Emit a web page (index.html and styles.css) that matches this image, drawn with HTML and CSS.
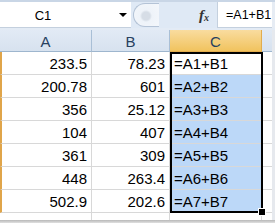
FILE: index.html
```html
<!DOCTYPE html>
<html>
<head>
<meta charset="utf-8">
<link rel="stylesheet" href="styles.css">
</head>
<body>
<div class="app">
  <div class="fbar">
    <div class="namebox">
      <span class="name">C1</span>
      <span class="arrow"></span>
    </div>
    <div class="mid">
      <span class="knob"></span>
      <span class="fx">f<sub>x</sub></span>
    </div>
    <div class="finput">=A1+B1</div>
    <div class="fright"></div>
  </div>
  <div class="gap"></div>
  <div class="sheet">
    <div class="hdr">A</div><div class="hdr">B</div><div class="hdr sel">C</div><div class="hdr last"></div><div class="side"></div>

    <div class="c num lb">233.5</div><div class="c num">78.23</div><div class="c f active">=A1+B1</div><div class="c e"></div><div class="side"></div>
    <div class="c num lb">200.78</div><div class="c num">601</div><div class="c f">=A2+B2</div><div class="c e"></div><div class="side"></div>
    <div class="c num lb">356</div><div class="c num">25.12</div><div class="c f">=A3+B3</div><div class="c e"></div><div class="side"></div>
    <div class="c num lb">104</div><div class="c num">407</div><div class="c f">=A4+B4</div><div class="c e"></div><div class="side"></div>
    <div class="c num lb">361</div><div class="c num">309</div><div class="c f">=A5+B5</div><div class="c e"></div><div class="side"></div>
    <div class="c num lb">448</div><div class="c num">263.4</div><div class="c f">=A6+B6</div><div class="c e"></div><div class="side"></div>
    <div class="c num lb">502.9</div><div class="c num">202.6</div><div class="c f">=A7+B7</div><div class="c e"></div><div class="side"></div>
    <div class="c"></div><div class="c"></div><div class="c"></div><div class="c e"></div><div class="side"></div>

    <div class="selbox"><span class="handle"></span></div>
  </div>
  <div class="shadow"></div>
</div>
</body>
</html>
```
FILE: styles.css
```css
html, body {
  margin: 0;
  padding: 0;
  background: #ffffff;
  overflow: hidden;
}
.app {
  width: 275px;
  height: 223px;
  font-family: "Liberation Sans", Arial, sans-serif;
  font-size: 15px;
  color: #000;
  position: relative;
  overflow: hidden;
}
.fbar {
  height: 28px;
  display: flex;
  background: #dfe9f5;
  border-top: 2px solid #c9d6e6;
  box-sizing: border-box;
}
.namebox {
  width: 131px;
  background: #fff;
  border-bottom: 1px solid #c4d0de;
  display: flex;
  align-items: center;
  box-sizing: border-box;
  font-size: 13px;
}
.name {
  width: 86px;
  text-align: center;
  padding-top: 1px;
}
.arrow {
  margin-left: 33px;
  width: 0;
  height: 0;
  border-left: 4px solid transparent;
  border-right: 4px solid transparent;
  border-top: 4px solid #000;
}
.mid {
  width: 86px;
  display: flex;
  align-items: center;
  position: relative;
}
.knob {
  width: 26px;
  height: 24px;
  margin-left: 2px;
  border-radius: 13px 0 0 13px;
  background: radial-gradient(circle at 12px 12px, #d6dde6 0, #d6dde6 4px, #eef3f9 6px, #f4f7fb 100%);
  border: 1px solid #b4c3d6;
  border-right: none;
  box-sizing: border-box;
}
.fx {
  margin-left: auto;
  margin-right: 8px;
  font-family: "Liberation Serif", serif;
  font-style: italic;
  font-weight: bold;
  font-size: 15px;
  color: #333;
}
.fx sub {
  font-size: 10px;
  vertical-align: -1px;
}
.finput {
  width: 55px;
  background: #fff;
  display: flex;
  align-items: center;
  padding-left: 8px;
  box-sizing: border-box;
  border-left: 1px solid #c4d0de;
  border-bottom: 1px solid #c4d0de;
  padding-top: 1px;
  white-space: nowrap;
  font-size: 12.5px;
}
.fright {
  flex: 1;
  background: #e6ecf4;
}
.gap {
  height: 2px;
  background: #e3ebf5;
}
.sheet {
  display: grid;
  grid-template-columns: 92px 78px 92px 10px 3px;
  grid-template-rows: 22px repeat(8, 23px);
  position: relative;
}
.hdr {
  background: linear-gradient(#e2eaf5, #d7e2ef);
  border-right: 1px solid #a9bfd6;
  border-bottom: 1px solid #9eb6ce;
  color: #27415f;
  display: flex;
  align-items: center;
  justify-content: center;
  box-sizing: border-box;
  font-size: 15px;
  padding-top: 1px;
}
.hdr.sel {
  background: linear-gradient(#f9dc9f, #f1c35e);
  border-right: 1px solid #e2ac4d;
  border-bottom: 1px solid #e2ac4d;
  color: #27415f;
}
.hdr.last {
  border-right: none;
}
.side {
  background: #e6e9ee;
}
.c {
  border-right: 1px solid #d8d8d8;
  border-bottom: 1px solid #d8d8d8;
  box-sizing: border-box;
  display: flex;
  align-items: center;
  white-space: nowrap;
  overflow: hidden;
  padding-top: 1px;
}
.c.lb {
  border-left: 2px solid #e0a54a;
}
.c.e {
  border-right: none;
}
.num {
  justify-content: flex-end;
  padding-right: 4px;
}
.f {
  background: #bcd8f8;
  padding-left: 4px;
}
.f.active {
  background: #fff;
}
.selbox {
  position: absolute;
  left: 170px;
  top: 22px;
  width: 93px;
  height: 161px;
  border: 2px solid #000;
  box-sizing: border-box;
  pointer-events: none;
}
.handle {
  position: absolute;
  right: -5px;
  bottom: -5px;
  width: 6px;
  height: 6px;
  background: #000;
  border: 1px solid #fff;
}
.shadow {
  position: absolute;
  left: 0;
  right: 0;
  top: 220px;
  height: 3px;
  background: linear-gradient(#b8b8b8, #e0e0e0);
}
```
